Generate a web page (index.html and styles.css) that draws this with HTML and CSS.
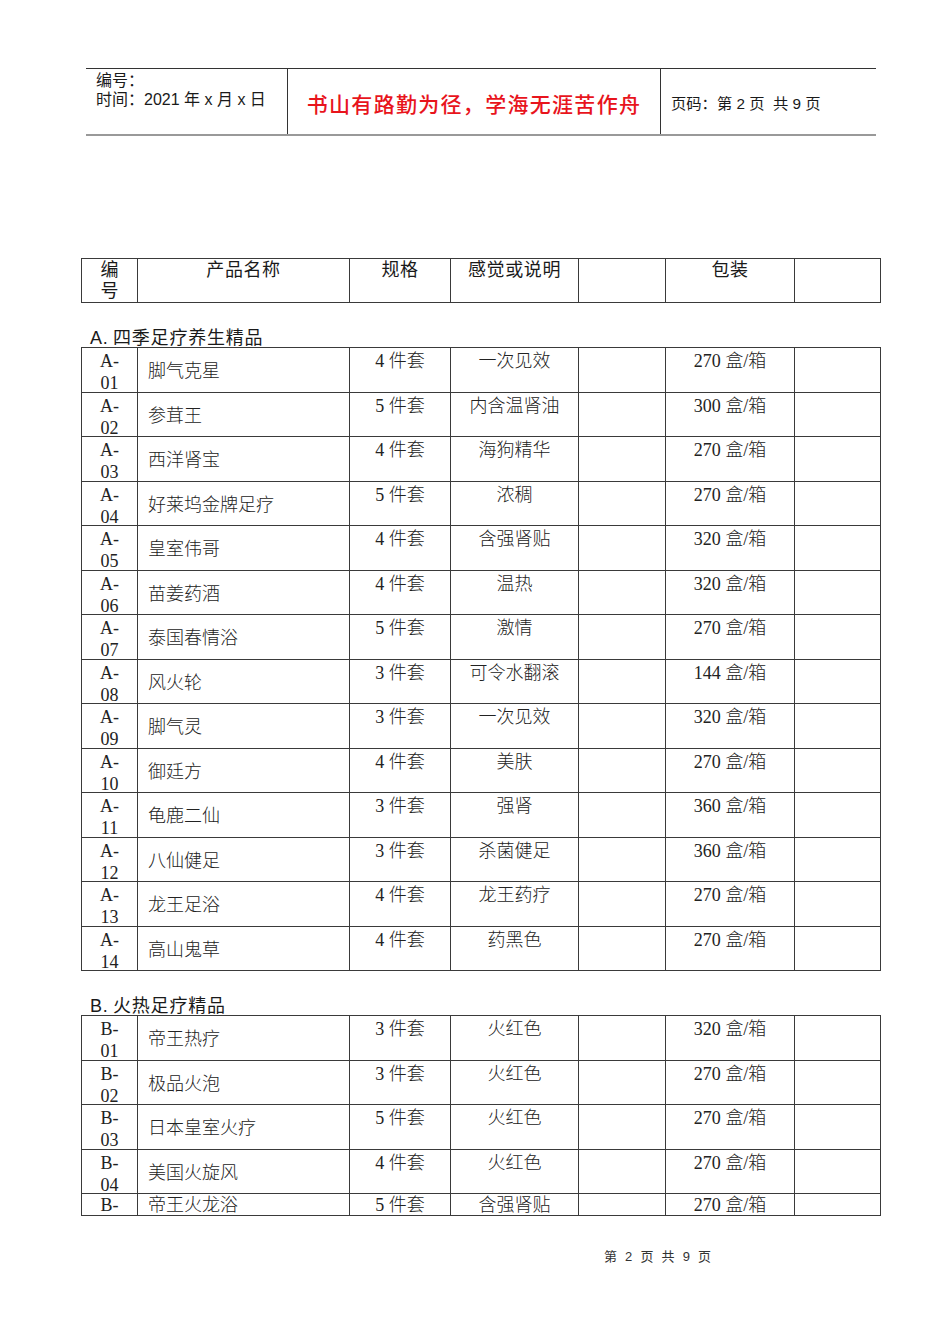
FILE: index.html
```html
<!DOCTYPE html>
<html lang="zh">
<head>
<meta charset="utf-8">
<title>产品清单</title>
<link rel="stylesheet" href="styles.css">
</head>
<body>
<div class="page">
  <div class="doc-head">
    <div class="dh-left">
      <div>编号：</div>
      <div>时间：2021 年 x 月 x 日</div>
    </div>
    <div class="dh-mid">书山有路勤为径，学海无涯苦作舟</div>
    <div class="dh-right">页码：第 2 页&nbsp; 共 9 页</div>
  </div>

  <table class="grid thead-table">
    <colgroup><col class="c1"><col class="c2"><col class="c3"><col class="c4"><col class="c5"><col class="c6"><col class="c7"></colgroup>
    <tr class="hrow">
      <td class="code">编<br>号</td>
      <td class="ctr">产品名称</td>
      <td class="ctr">规格</td>
      <td class="ctr">感觉或说明</td>
      <td></td>
      <td class="ctr">包装</td>
      <td></td>
    </tr>
  </table>

  <div class="section">A.&thinsp;四季足疗养生精品</div>
  <table class="grid data">
    <colgroup><col class="c1"><col class="c2"><col class="c3"><col class="c4"><col class="c5"><col class="c6"><col class="c7"></colgroup>
    <tr><td class="code"><div class="in">A-<br>01</div></td><td class="name">脚气克星</td><td class="top"><div class="in">4 件套</div></td><td class="top"><div class="in">一次见效</div></td><td></td><td class="top"><div class="in">270 盒/箱</div></td><td></td></tr>
    <tr><td class="code"><div class="in">A-<br>02</div></td><td class="name">参茸王</td><td class="top"><div class="in">5 件套</div></td><td class="top"><div class="in">内含温肾油</div></td><td></td><td class="top"><div class="in">300 盒/箱</div></td><td></td></tr>
    <tr><td class="code"><div class="in">A-<br>03</div></td><td class="name">西洋肾宝</td><td class="top"><div class="in">4 件套</div></td><td class="top"><div class="in">海狗精华</div></td><td></td><td class="top"><div class="in">270 盒/箱</div></td><td></td></tr>
    <tr><td class="code"><div class="in">A-<br>04</div></td><td class="name">好莱坞金牌足疗</td><td class="top"><div class="in">5 件套</div></td><td class="top"><div class="in">浓稠</div></td><td></td><td class="top"><div class="in">270 盒/箱</div></td><td></td></tr>
    <tr><td class="code"><div class="in">A-<br>05</div></td><td class="name">皇室伟哥</td><td class="top"><div class="in">4 件套</div></td><td class="top"><div class="in">含强肾贴</div></td><td></td><td class="top"><div class="in">320 盒/箱</div></td><td></td></tr>
    <tr><td class="code"><div class="in">A-<br>06</div></td><td class="name">苗姜药酒</td><td class="top"><div class="in">4 件套</div></td><td class="top"><div class="in">温热</div></td><td></td><td class="top"><div class="in">320 盒/箱</div></td><td></td></tr>
    <tr><td class="code"><div class="in">A-<br>07</div></td><td class="name">泰国春情浴</td><td class="top"><div class="in">5 件套</div></td><td class="top"><div class="in">激情</div></td><td></td><td class="top"><div class="in">270 盒/箱</div></td><td></td></tr>
    <tr><td class="code"><div class="in">A-<br>08</div></td><td class="name">风火轮</td><td class="top"><div class="in">3 件套</div></td><td class="top"><div class="in">可令水翻滚</div></td><td></td><td class="top"><div class="in">144 盒/箱</div></td><td></td></tr>
    <tr><td class="code"><div class="in">A-<br>09</div></td><td class="name">脚气灵</td><td class="top"><div class="in">3 件套</div></td><td class="top"><div class="in">一次见效</div></td><td></td><td class="top"><div class="in">320 盒/箱</div></td><td></td></tr>
    <tr><td class="code"><div class="in">A-<br>10</div></td><td class="name">御廷方</td><td class="top"><div class="in">4 件套</div></td><td class="top"><div class="in">美肤</div></td><td></td><td class="top"><div class="in">270 盒/箱</div></td><td></td></tr>
    <tr><td class="code"><div class="in">A-<br>11</div></td><td class="name">龟鹿二仙</td><td class="top"><div class="in">3 件套</div></td><td class="top"><div class="in">强肾</div></td><td></td><td class="top"><div class="in">360 盒/箱</div></td><td></td></tr>
    <tr><td class="code"><div class="in">A-<br>12</div></td><td class="name">八仙健足</td><td class="top"><div class="in">3 件套</div></td><td class="top"><div class="in">杀菌健足</div></td><td></td><td class="top"><div class="in">360 盒/箱</div></td><td></td></tr>
    <tr><td class="code"><div class="in">A-<br>13</div></td><td class="name">龙王足浴</td><td class="top"><div class="in">4 件套</div></td><td class="top"><div class="in">龙王药疗</div></td><td></td><td class="top"><div class="in">270 盒/箱</div></td><td></td></tr>
    <tr><td class="code"><div class="in">A-<br>14</div></td><td class="name">高山鬼草</td><td class="top"><div class="in">4 件套</div></td><td class="top"><div class="in">药黑色</div></td><td></td><td class="top"><div class="in">270 盒/箱</div></td><td></td></tr>
  </table>

  <div class="section">B.&thinsp;火热足疗精品</div>
  <table class="grid data">
    <colgroup><col class="c1"><col class="c2"><col class="c3"><col class="c4"><col class="c5"><col class="c6"><col class="c7"></colgroup>
    <tr><td class="code"><div class="in">B-<br>01</div></td><td class="name">帝王热疗</td><td class="top"><div class="in">3 件套</div></td><td class="top"><div class="in">火红色</div></td><td></td><td class="top"><div class="in">320 盒/箱</div></td><td></td></tr>
    <tr><td class="code"><div class="in">B-<br>02</div></td><td class="name">极品火泡</td><td class="top"><div class="in">3 件套</div></td><td class="top"><div class="in">火红色</div></td><td></td><td class="top"><div class="in">270 盒/箱</div></td><td></td></tr>
    <tr><td class="code"><div class="in">B-<br>03</div></td><td class="name">日本皇室火疗</td><td class="top"><div class="in">5 件套</div></td><td class="top"><div class="in">火红色</div></td><td></td><td class="top"><div class="in">270 盒/箱</div></td><td></td></tr>
    <tr><td class="code"><div class="in">B-<br>04</div></td><td class="name">美国火旋风</td><td class="top"><div class="in">4 件套</div></td><td class="top"><div class="in">火红色</div></td><td></td><td class="top"><div class="in">270 盒/箱</div></td><td></td></tr>
    <tr class="cut"><td class="code"><div class="clip">B-</div></td><td class="name"><div class="clip">帝王火龙浴</div></td><td class="top"><div class="clip">5 件套</div></td><td class="top"><div class="clip">含强肾贴</div></td><td></td><td class="top"><div class="clip">270 盒/箱</div></td><td></td></tr>
  </table>

  <div class="foot">第 2 页 共 9 页</div>
</div>
</body>
</html>
```

FILE: styles.css
```css
html, body {
  margin: 0;
  padding: 0;
  background: #ffffff;
}

.page {
  width: 950px;
  height: 1344px;
  overflow: hidden;
  padding-top: 68px;
  box-sizing: border-box;
  color: #1a1a1a;
  font-family: "Liberation Sans", "Noto Sans CJK SC", sans-serif;
}

.doc-head {
  margin-left: 86px;
  width: 790px;
  height: 68px;
  box-sizing: border-box;
  border-top: 1px solid #333;
  border-bottom: 2px solid #999;
  display: flex;
}

.dh-left {
  width: 202px;
  box-sizing: border-box;
  padding: 2px 0 0 10px;
  font-size: 16px;
  line-height: 19px;
  border-right: 1px solid #333;
}

.dh-mid {
  width: 373px;
  box-sizing: border-box;
  border-right: 1px solid #333;
  display: flex;
  align-items: center;
  justify-content: center;
  padding-top: 3px;
  font-size: 21px;
  color: #e8141c;
  font-weight: 500;
  letter-spacing: 1.3px;
}

.dh-right {
  flex: 1;
  display: flex;
  align-items: center;
  padding: 0 0 0 10px;
  font-size: 15.3px;
}

.grid {
  margin-left: 81px;
  width: 800px;
  border-collapse: collapse;
  table-layout: fixed;
}

.grid td {
  border: 1px solid #3a3a3a;
  padding: 0;
  vertical-align: top;
}

.c1 { width: 56px; }
.c2 { width: 212px; }
.c3 { width: 101px; }
.c4 { width: 128px; }
.c5 { width: 87px; }
.c6 { width: 129px; }
.c7 { width: 86px; }

.thead-table {
  margin-top: 122px;
}

.hrow td {
  height: 42px;
  font-size: 18px;
  line-height: 21px;
  padding-top: 1px;
}

.hrow .ctr {
  letter-spacing: 0.6px;
}

.hrow .code {
  text-align: center;
}

.ctr {
  text-align: center;
}

.section {
  height: 44px;
  box-sizing: border-box;
  display: flex;
  align-items: flex-end;
  padding-left: 90px;
  font-size: 18px;
  line-height: 18px;
  letter-spacing: 0.8px;
}

.data tr {
  height: 44.5px;
}

.data td {
  font-family: "Liberation Serif", "Noto Sans CJK SC", serif;
  font-size: 18px;
  font-weight: 300;
  line-height: 22px;
  color: #222;
}

.in {
  margin-top: 2px;
  margin-bottom: -6px;
}

.data .code {
  text-align: center;
}

.data .name {
  vertical-align: middle;
  padding-left: 10px;
  padding-top: 3px;
}

.data .top {
  text-align: center;
}

.data .cut {
  height: 22px;
}

.data .cut td {
  vertical-align: top;
  padding-top: 0;
}

.clip {
  height: 21px;
  line-height: 22px;
  overflow: hidden;
}

.foot {
  margin-top: 30px;
  padding-left: 604px;
  font-size: 13px;
  font-family: "Liberation Sans", "Noto Sans CJK SC", sans-serif;
  color: #333;
  word-spacing: 4.5px;
}
```
